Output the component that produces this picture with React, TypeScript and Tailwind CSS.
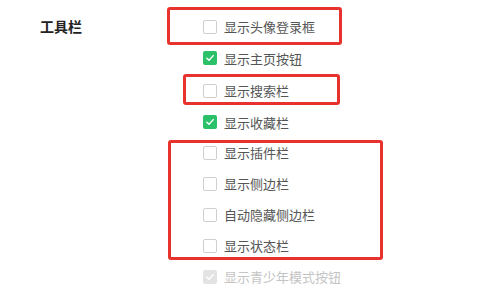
import React from "react";

type Item = { label: string; checked?: boolean; disabled?: boolean; h: string };

const items: Item[] = [
  { label: "显示头像登录框", h: "h-[31px]" },
  { label: "显示主页按钮", checked: true, h: "h-[32px]" },
  { label: "显示搜索栏", h: "h-[33px]" },
  { label: "显示收藏栏", checked: true, h: "h-[30px]" },
  { label: "显示插件栏", h: "h-[31px]" },
  { label: "显示侧边栏", h: "h-[31px]" },
  { label: "自动隐藏侧边栏", h: "h-[31px]" },
  { label: "显示状态栏", h: "h-[31px]" },
  { label: "显示青少年模式按钮", checked: true, disabled: true, h: "h-[31px]" },
];

function Box({ checked, disabled }: { checked?: boolean; disabled?: boolean }) {
  if (checked) {
    return (
      <span
        className={
          "flex items-center justify-center w-[14px] h-[14px] rounded-[2px] " +
          (disabled ? "bg-[#e3e3e3]" : "bg-[#2ac168]")
        }
      >
        <svg width="10" height="10" viewBox="0 0 10 10" fill="none">
          <path d="M1.8 5.2 L4 7.3 L8.3 2.6" stroke="white" strokeWidth="1.4" strokeLinecap="round" strokeLinejoin="round" />
        </svg>
      </span>
    );
  }
  return <span className="block w-[14px] h-[14px] rounded-[2px] border border-[#cfcfcf] bg-white" />;
}

export default function App() {
  return (
    <div
      className="w-[489px] h-[304px] bg-white flex"
      style={{ fontFamily: '"Noto Sans CJK SC", "Noto Sans", sans-serif' }}
    >
      <div className="w-[163px] pl-[40px] pt-[15px] text-[14px] font-bold text-[#222] leading-[22px]">
        工具栏
      </div>
      <div className="relative flex-1 pt-[11px]">
        {items.map((it) => (
          <div key={it.label} className={"flex items-center gap-[7px] pl-[40px] " + it.h}>
            <Box checked={it.checked} disabled={it.disabled} />
            <span
              className={
                "text-[13px] leading-none " + (it.disabled ? "text-[#c4c4c4]" : "text-[#555]")
              }
            >
              {it.label}
            </span>
          </div>
        ))}
        <div className="absolute left-[4px] top-[7px] w-[175px] h-[38px] border-[3px] border-[#e8322e] rounded-[3px]" />
        <div className="absolute left-[20px] top-[74px] w-[157px] h-[31px] border-[3px] border-[#e8322e] rounded-[3px]" />
        <div className="absolute left-[5px] top-[140px] w-[215px] h-[120px] border-[3px] border-[#e8322e] rounded-[3px]" />
      </div>
    </div>
  );
}
